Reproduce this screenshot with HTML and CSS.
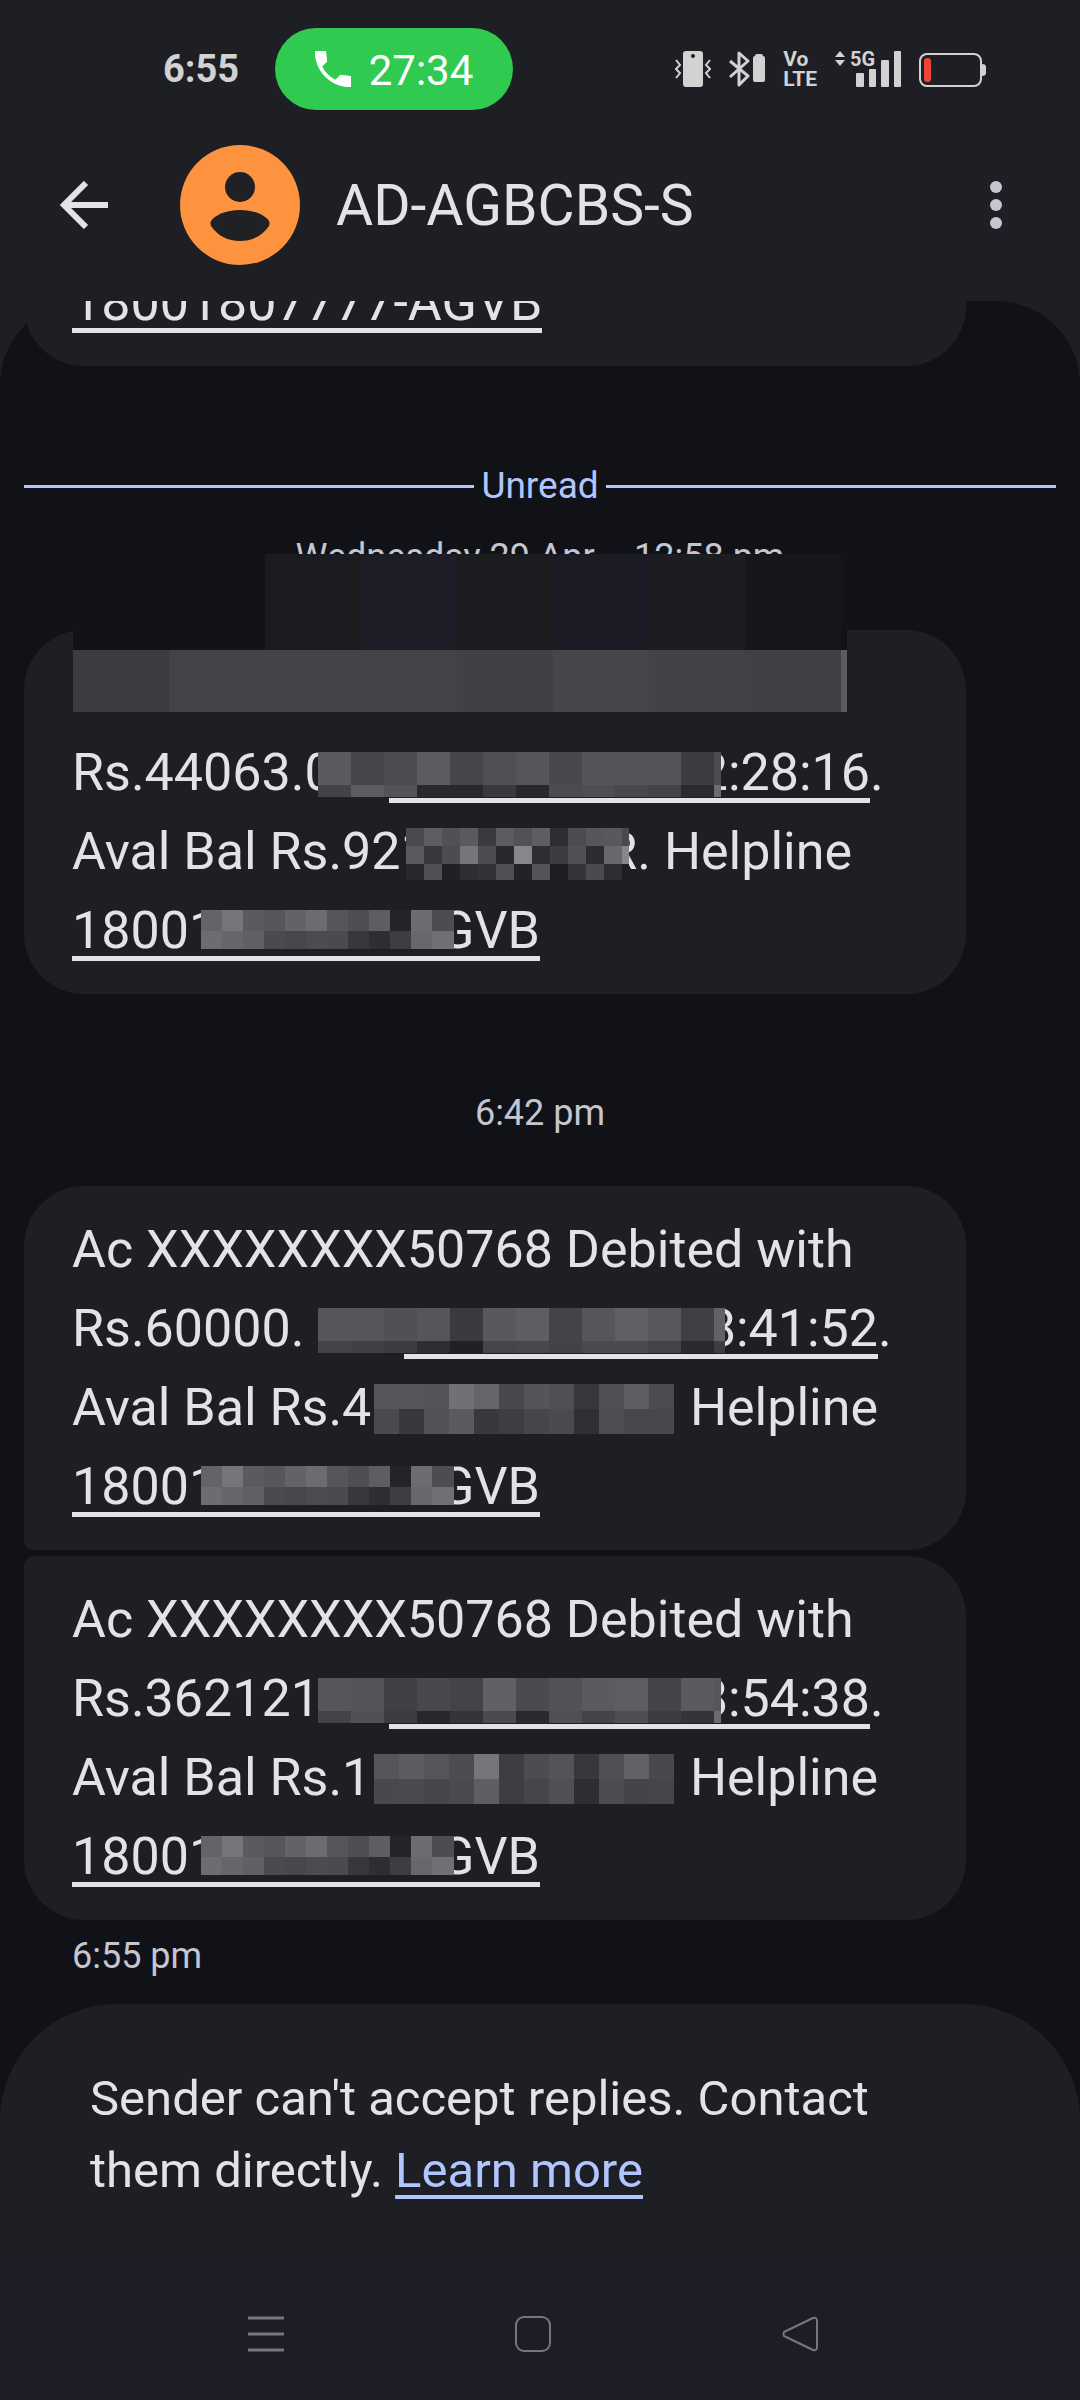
FILE: index.html
```html
<!DOCTYPE html>
<html lang="en">
<head>
<meta charset="utf-8">
<meta name="viewport" content="width=device-width, initial-scale=1">
<title>AD-AGBCBS-S</title>
<link rel="stylesheet" href="styles.css">
</head>
<body>
<div class="screen">
  <header class="header">
    <div class="status">
      <span class="clock">6:55</span>
      <button class="call" type="button">
        <svg width="36" height="36" viewBox="3 3 18 18" aria-hidden="true"><path fill="#fff" d="M21 15.5l-5.3-.6-2.5 2.5a15.100 15.100 0 0 1-6.600-6.600l2.500-2.500L8.500 3H3C2.500 12.800 11.200 21.500 21 21z"/></svg>
        <span>27:34</span>
      </button>
      <div class="indicators">
        <svg width="36" height="36" viewBox="0 0 36 36" aria-hidden="true">
          <rect x="8" width="20" height="36" rx="3" fill="#d2d2d2"/><circle cx="18" cy="5" r="2" fill="#1e1f24"/>
          <path d="M1 9l4 5-4 4 4 4-4 5M35 9l-4 5 4 4-4 4 4 5" fill="none" stroke="#d2d2d2" stroke-width="2"/>
        </svg>
        <svg width="36" height="36" viewBox="0 0 36 36" aria-hidden="true">
          <path d="M1 10l18 15-9 9V2l9 8L1 26" fill="none" stroke="#d2d2d2" stroke-width="3" stroke-linejoin="round"/>
          <path d="M26 5q0-2 2-2h4q2 0 2 2q2 0 2 2v22q0 2-2 2H26q-2 0-2-2V7q0-2 2-2z" fill="#d2d2d2"/>
        </svg>
        <span class="volte"><span>Vo</span><span>LTE</span></span>
        <span class="signal">
          <svg width="66" height="36" viewBox="0 0 66 36" fill="#d2d2d2" aria-hidden="true">
            <path d="M0 6l5-6 5 6zM0 9h10l-5 6z"/>
            <rect x="21" y="22" width="8" height="14" rx="1"/><rect x="34" y="18" width="7" height="18" rx="1"/><rect x="46" y="9" width="8" height="27" rx="1"/><rect x="59" y="0" width="7" height="36" rx="1"/>
          </svg>
          <span class="network">5G</span>
        </span>
        <svg width="67" height="36" viewBox="0 0 67 36" aria-hidden="true">
          <rect x="1" y="3" width="61" height="32" rx="7" fill="none" stroke="#d2d2d2" stroke-width="2"/>
          <rect x="5" y="7" width="7" height="24" rx="3" fill="#ec4438"/>
          <path d="M63 13q4 0 4 3v6q0 3-4 3z" fill="#d2d2d2"/>
        </svg>
      </div>
    </div>
    <div class="appbar">
      <button class="icon-button" type="button" aria-label="Back">
        <svg width="48" height="48" viewBox="0 0 48 48" fill="none" stroke="#e2e3e9" stroke-width="6"><path d="M48 24H5M26 2L4 24l22 22"/></svg>
      </button>
      <svg class="avatar" width="120" height="120" viewBox="0 0 120 120" aria-hidden="true">
        <circle cx="60" cy="60" r="60" fill="#fd923f"/>
        <circle cx="60" cy="42" r="15" fill="#202124"/>
        <path d="M60 65c14 0 25 5 29 11q1 2 0 5C82 91 72 96 60 96s-22-5-29-15q-1-3 0-5c4-6 15-11 29-11z" fill="#202124"/>
      </svg>
      <h1 class="title">AD-AGBCBS-S</h1>
      <button class="icon-button" type="button" aria-label="More options">
        <svg width="12" height="48" viewBox="0 0 12 48" fill="#c5c6d0"><circle cx="6" cy="6" r="6"/><circle cx="6" cy="24" r="6"/><circle cx="6" cy="42" r="6"/></svg>
      </button>
    </div>
  </header>

  <main class="conversation">
    <article class="bubble earlier">
      <div class="line"><a class="link" href="#">18001807777-AGVB</a></div>
    </article>

    <div class="unread">Unread</div>
    <time class="stamp centered">Wednesday 29 Apr <span class="dot">·</span> 12:58 pm</time>

    <article class="bubble">
      <svg class="mosaic cover" width="774" height="158" data-cell="96" data-rows="96 62" data-colors="121318 121318 1b1c20 1d1d27 1b1c20 1b1b25 1c1d21 16171b 121317|3b3c40 434448 434448 434448 404145 45464a 424347 404145 5b5c60"></svg>
      <div class="line"></div>
      <div class="line">
        <span class="lead w317">Rs.44063.0</span><a class="link date" href="#">2:28:16</a><span>.</span>
        <svg class="mosaic date-mask" width="403" height="45" data-cell="33" data-rows="33 12" data-colors="5a5b5f 46474b 4b4c50 5c5d61 45464a 4f5054 55565a 48494d 54555a 54555a 545559 3c3d42 4b4c50|434448 5c5d61 535458 28292e 28292d 393a3e 28292d 4b4c51 4e4f53 47484c 434448 2a2b2f 6b6c70"></svg>
      </div>
      <div class="line split short">
        <span>Aval Bal Rs.921</span><span>R. Helpline</span>
        <svg class="mosaic balance-mask narrow" width="223" height="52" data-cell="18" data-rows="18 18 16" data-colors="4a4b4f 5d5e62 505155 5a5b5f 3a3b40 5b5c60 515257 5e5f63 2d2e33 4b4c51 57565b 5b585d 4a494e|595a5e 38393e 4c4d52 75767a 4c4d52 28292e 86878b 2d2e33 3c3d41 505156 2c2d32 68696d 86878b|27282c 505156 202126 2d2e32 323338 4f5055 222327 535458 1d1e22 333439 4a4b50 2d2e32 1e1f24"></svg>
      </div>
      <div class="line">
        <a class="link phone" href="#"><span>18001</span><span>GVB</span></a>
        <svg class="mosaic phone-mask" width="253" height="39" data-cell="21" data-rows="21 18" data-colors="636469 75767a 5a5b5f 56575b 626367 6b6c70 55565b 4e4f53 5d5e62 23242a 6c6d71 4c4d51|6c6d71 65666a 606165 4a4b4f 47484c 4b4c50 4a4b4f 37383d 2d2e33 3d3e42 67686c 6f7074"></svg>
      </div>
    </article>

    <time class="stamp centered evening">6:42 pm</time>

    <article class="bubble first">
      <div class="line">Ac XXXXXXXX50768 Debited with</div>
      <div class="line">
        <span class="lead w332">Rs.60000.</span><a class="link date w474" href="#">8:41:52</a><span>.</span>
        <svg class="mosaic date-mask" width="407" height="45" data-cell="33" data-rows="33 12" data-colors="55565a 55565a 505155 55565a 3a3b40 58595d 5e5f63 434448 55565a 5f6065 57585c 403f45 626367|434448 404145 3c3d41 2d2e33 202126 45464b 47484d 424347 4a4b50 4a4b50 434448 29292f 3d3e42"></svg>
      </div>
      <div class="line split">
        <span>Aval Bal Rs.46</span><span>Helpline</span>
        <svg class="mosaic balance-mask" width="300" height="50" data-cell="25" data-rows="25 25" data-colors="55565b 56575b 535459 707175 65666a 48494d 54555a 4f5054 37383d 4f5055 5e5f63 4b4c51|4a4b50 38393e 515257 5a5b5f 38393d 3d3e42 45464b 4a4b50 2f3035 4d4e52 47484c 47484c"></svg>
      </div>
      <div class="line">
        <a class="link phone" href="#"><span>18001</span><span>GVB</span></a>
        <svg class="mosaic phone-mask" width="253" height="39" data-cell="21" data-rows="21 18" data-colors="636469 75767a 5a5b5f 56575b 626367 6b6c70 55565b 4e4f53 5d5e62 23242a 6c6d71 4c4d51|6c6d71 65666a 606165 4a4b4f 47484c 4b4c50 4a4b4f 37383d 2d2e33 3d3e42 67686c 6f7074"></svg>
      </div>
    </article>

    <article class="bubble last">
      <div class="line">Ac XXXXXXXX50768 Debited with</div>
      <div class="line">
        <span class="lead w317">Rs.362121.0</span><a class="link date" href="#">8:54:38</a><span>.</span>
        <svg class="mosaic date-mask" width="403" height="45" data-cell="33" data-rows="33 12" data-colors="55565a 535459 404146 48494e 434449 606166 4a4b50 515257 5a5b60 5d5e63 434449 5a5b60 56575c|434449 505156 3b3c41 27282d 343439 4a4b50 2a2b30 4f5055 434449 4e4f54 3c3d42 333439 6b6c71"></svg>
      </div>
      <div class="line split">
        <span>Aval Bal Rs.10</span><span>Helpline</span>
        <svg class="mosaic balance-mask" width="300" height="50" data-cell="25" data-rows="25 25" data-colors="55565a 5c5d62 55565a 4c4d52 75767b 3d3e43 4c4d52 535459 37383d 4f5055 616267 48494e|48494e 4a4b50 45464b 4a4b50 5e5f64 3d3e43 45464b 4f5055 2d2e33 4b4c51 434449 45464b"></svg>
      </div>
      <div class="line">
        <a class="link phone" href="#"><span>18001</span><span>GVB</span></a>
        <svg class="mosaic phone-mask" width="253" height="39" data-cell="21" data-rows="21 18" data-colors="636469 75767a 5a5b5f 56575b 626367 6b6c70 55565b 4e4f53 5d5e62 23242a 6c6d71 4c4d51|6c6d71 65666a 606165 4a4b4f 47484c 4b4c50 4a4b4f 37383d 2d2e33 3d3e42 67686c 6f7074"></svg>
      </div>
    </article>

    <time class="stamp sent">6:55 pm</time>
  </main>

  <footer class="notice">
    <p>Sender can't accept replies. Contact them directly. <a class="learn" href="#">Learn more</a></p>
  </footer>

  <nav class="navbar" aria-label="System navigation">
    <button type="button" aria-label="Recent apps"><svg width="36" height="36" viewBox="0 0 36 36" stroke="#77777b" stroke-width="3"><path d="M0 2h36M0 18h36M0 34h36"/></svg></button>
    <button type="button" aria-label="Home"><svg width="36" height="36" viewBox="0 0 36 36" fill="none" stroke="#77777b" stroke-width="2"><rect x="1" y="1" width="34" height="34" rx="8"/></svg></button>
    <button type="button" aria-label="Back"><svg width="36" height="36" viewBox="0 0 36 36" fill="none" stroke="#77777b" stroke-width="2" stroke-linejoin="round"><path d="M31 2L2 16q-1 2 0 4l29 14q4 1 4-3V5q0-4-4-3z"/></svg></button>
  </nav>
</div>
<script src="mosaic.js"></script>
</body>
</html>
```
FILE: styles.css
```css
* { box-sizing: border-box; }

body {
  margin: 0;
  background: #111217;
  color: #e2e3e9;
  font-family: Roboto, "Liberation Sans", sans-serif;
}

button {
  border: 0;
  padding: 0;
  background: none;
  color: inherit;
  font: inherit;
}

svg { display: block; flex: none; }

.screen {
  display: flex;
  flex-direction: column;
  min-height: 100vh;
}

/* Header */
.header {
  position: relative;
  z-index: 1;
  background: #1e1f24;
}

.status {
  display: flex;
  align-items: center;
  height: 137px;
  padding: 0 94px 0 163px;
}

.clock {
  width: 112px;
  color: #d2d2d2;
  font-size: 38px;
  font-weight: 700;
}

.call {
  display: flex;
  align-items: center;
  justify-content: center;
  gap: 18px;
  width: 238px;
  height: 82px;
  border-radius: 41px;
  background: #30ca50;
  color: #fff;
  font-size: 42px;
}

.call span { padding-top: 3px; }

.indicators {
  display: flex;
  align-items: center;
  gap: 18px;
  margin-left: auto;
}

.volte {
  display: flex;
  flex-direction: column;
  color: #d2d2d2;
  font-size: 21px;
  font-weight: 700;
  line-height: 20px;
}

.signal { position: relative; }

.network {
  position: absolute;
  left: 15px;
  top: -1px;
  color: #d2d2d2;
  font-size: 20px;
  font-weight: 700;
  line-height: 18px;
}

.appbar {
  display: flex;
  align-items: center;
  height: 164px;
  padding: 0 78px 28px 60px;
}

.avatar { margin: 0 36px 0 72px; }

.title {
  flex: 1;
  margin: 0;
  font-size: 57px;
  font-weight: 400;
}

/* Messages */
.conversation {
  display: flex;
  flex-direction: column;
  padding: 0 24px 26px;
  overflow: hidden;
  border-radius: 84px 84px 0 0;
  background: #111217;
  box-shadow: 0 -84px 0 84px #1e1f24;
}

.bubble {
  position: relative;
  width: 942px;
  max-width: 100%;
  padding: 24px 48px;
  border-radius: 60px;
  background: #1e1f24;
}

.earlier {
  margin-top: -38px;
  padding-top: 0;
  border-radius: 0 0 60px 60px;
}

.first { margin-bottom: 6px; border-bottom-left-radius: 10px; }
.last { border-top-left-radius: 10px; }

.line {
  position: relative;
  display: flex;
  height: 79px;
  font-size: 52px;
  line-height: 79px;
  white-space: nowrap;
}

.link {
  position: relative;
  color: inherit;
  text-decoration: none;
}

.link::after {
  content: "";
  position: absolute;
  left: 0;
  right: 0;
  top: 65px;
  height: 5px;
  background: #e2e3e9;
}

.lead { flex: none; }
.w317 { width: 317px; }
.w332 { width: 332px; }

.date { width: 481px; text-align: right; }
.w474 { width: 474px; }

.phone {
  display: flex;
  justify-content: space-between;
  width: 468px;
}

.split { justify-content: space-between; width: 806px; }
.short { width: 780px; }

/* Pixelated patches laid over the private parts of a message */
.mosaic { position: absolute; }
.cover { left: 49px; top: -76px; }
.date-mask { left: 246px; top: 19px; }
.balance-mask { left: 302px; top: 16px; }
.narrow { left: 334px; }
.phone-mask { left: 129px; top: 19px; }

.unread {
  display: flex;
  align-items: center;
  gap: 7px;
  margin-top: 98px;
  color: #b1c5ff;
  font-size: 37px;
  line-height: 44px;
}

.unread::before, .unread::after {
  content: "";
  flex: 1;
  height: 3px;
  background: #b1c5ff;
}

.stamp {
  color: #c5c6d0;
  font-size: 36px;
  line-height: 44px;
}

.dot { margin: 0 6px; }

.centered {
  margin: 27px 0 51px;
  text-align: center;
}

.evening { margin-top: 97px; }
.sent { margin: 14px 48px 0; }

/* Reply notice */
.notice {
  padding: 59px 120px 60px 90px;
  border-radius: 117px 117px 0 0;
  background: #1e1f24;
  font-size: 49px;
  line-height: 72px;
}

.notice p { margin: 0; }

.learn {
  color: #b1c5ff;
  text-decoration-thickness: 4px;
  text-underline-offset: 8px;
  text-decoration-skip-ink: none;
}

.navbar {
  display: grid;
  flex: 1;
  grid-template-columns: repeat(3, 1fr);
  min-height: 132px;
  padding: 0 146px 0 132px;
  background: #1d1d25;
}

.navbar button {
  display: flex;
  align-items: center;
  justify-content: center;
}
```
FILE: mosaic.js
```js
// Fills each .mosaic with a grid of flat squares, one per listed colour.
for (const svg of document.querySelectorAll(".mosaic")) {
  const cell = Number(svg.dataset.cell);
  const heights = svg.dataset.rows.split(" ").map(Number);
  let y = 0;
  svg.dataset.colors.split("|").forEach((row, r) => {
    row.split(" ").forEach((color, c) => {
      const rect = document.createElementNS("http://www.w3.org/2000/svg", "rect");
      rect.setAttribute("x", c * cell);
      rect.setAttribute("y", y);
      rect.setAttribute("width", cell + 1);
      rect.setAttribute("height", heights[r]);
      rect.setAttribute("fill", "#" + color);
      svg.append(rect);
    });
    y += heights[r];
  });
}
```
